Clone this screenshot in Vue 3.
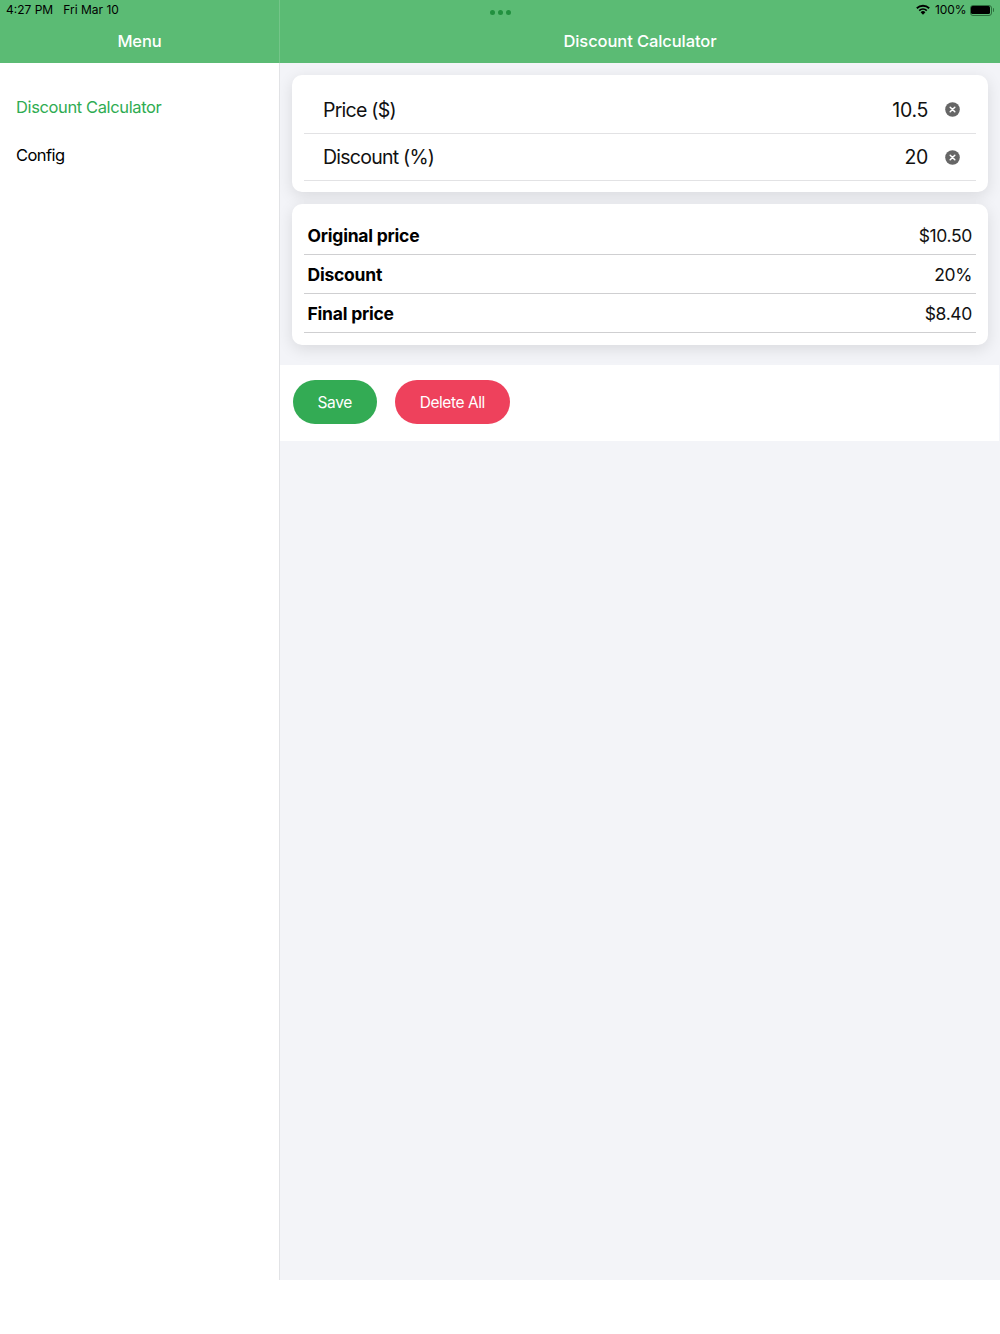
<script setup>
const inputs = [
  { label: 'Price ($)', value: '10.5' },
  { label: 'Discount (%)', value: '20' }
]
const results = [
  { label: 'Original price', value: '$10.50' },
  { label: 'Discount', value: '20%' },
  { label: 'Final price', value: '$8.40' }
]
</script>

<template>
  <div class="screen">
    <div class="status">
      <div class="status-left"><span>4:27 PM</span><span>Fri Mar 10</span></div>
      <div class="dots"><i></i><i></i><i></i></div>
      <div class="status-right">
        <svg class="wifi" width="14" height="11" viewBox="0 0 14 11">
          <path d="M7 10.8 4.6 8.2a3.4 3.4 0 0 1 4.8 0Z" fill="#000" />
          <path d="M3.8 7.3a4.7 4.7 0 0 1 6.4 0l1.2-1.4a6.5 6.5 0 0 0-8.8 0Z" fill="#000" />
          <path d="M1.4 5a8 8 0 0 1 11.2 0l1.2-1.4a9.8 9.8 0 0 0-13.6 0Z" fill="#000" />
        </svg>
        <span>100%</span>
        <div class="battery"><div class="battery-fill"></div></div>
        <div class="battery-cap"></div>
      </div>
    </div>
    <div class="split">
      <aside class="side">
        <header class="bar side-bar">Menu</header>
        <nav class="nav">
          <div class="nav-item active">Discount Calculator</div>
          <div class="nav-item">Config</div>
        </nav>
      </aside>
      <main class="main">
        <header class="bar">Discount Calculator</header>
        <section class="card inputs">
          <div v-for="f in inputs" :key="f.label" class="input-row">
            <span class="input-label">{{ f.label }}</span>
            <span class="input-value">{{ f.value }}</span>
            <svg class="clear" width="15" height="15" viewBox="0 0 15 15">
              <circle cx="7.5" cy="7.5" r="7.3" fill="#666" />
              <path d="M5.2 5.2l4.6 4.6M9.8 5.2l-4.6 4.6" stroke="#fff" stroke-width="1.5" stroke-linecap="round" />
            </svg>
          </div>
        </section>
        <section class="card results">
          <div v-for="r in results" :key="r.label" class="result-row">
            <span class="result-label">{{ r.label }}</span>
            <span class="result-value">{{ r.value }}</span>
          </div>
        </section>
        <div class="actions">
          <button class="btn save">Save</button>
          <button class="btn del">Delete All</button>
        </div>
      </main>
    </div>
  </div>
</template>

<style scoped>
.screen {
  position: relative;
  width: 1000px;
  height: 1334px;
  background: #fff;
  font-family: Inter, "Liberation Sans", sans-serif;
  color: #000;
  overflow: hidden;
}
.status {
  position: absolute;
  top: 0;
  left: 0;
  right: 0;
  height: 20px;
  display: flex;
  justify-content: space-between;
  align-items: center;
  padding: 0 6px;
  font-size: 12px;
  line-height: 20px;
  box-sizing: border-box;
}
.status-left { display: flex; gap: 10px; }
.status-right { display: flex; align-items: center; }
.status-right span { margin-left: 5px; letter-spacing: -0.1px; }
.wifi { margin-top: -1px; }
.battery {
  width: 22px;
  height: 11px;
  margin-left: 3px;
  border: 1px solid #2c6e3d;
  border-radius: 3px;
  padding: 0.5px;
  box-sizing: border-box;
}
.battery-fill { width: 100%; height: 100%; background: #000; border-radius: 1.5px; }
.battery-cap { width: 1.5px; height: 4px; margin-left: 1px; background: #2c6e3d; border-radius: 0 1px 1px 0; }
.dots {
  position: absolute;
  left: 490px;
  top: 10px;
  display: flex;
  gap: 3px;
}
.dots i { width: 5px; height: 5px; border-radius: 50%; background: #22903f; }
.split { display: flex; height: 1280px; }
.side { width: 280px; border-right: 1px solid #e2e3e6; box-sizing: border-box; flex: none; }
.bar {
  height: 63px;
  background: #5bbb74;
  color: #fff;
  font-size: 16.5px;
  font-weight: 500;
  letter-spacing: -0.09px;
  text-align: center;
  padding-top: 31px;
  line-height: 21px;
  box-sizing: border-box;
}
.side-bar { border-right: 1px solid #74c589; margin-right: -1px; }
.nav { padding-top: 20px; }
.nav-item { height: 49px; line-height: 48px; padding-left: 16px; font-size: 16.5px; letter-spacing: -0.38px; }
.nav-item:last-child { line-height: 46px; letter-spacing: -0.55px; }
.active { color: #2fac52; }
.main { flex: 1; background: #f3f4f8; }
.card {
  margin: 12px 12px 0 12px;
  background: #fff;
  border-radius: 10px;
  box-shadow: 0 4px 16px rgba(0, 0, 0, 0.11);
  padding: 0 12px;
}
.inputs { height: 117px; }
.input-row {
  height: 47px;
  display: flex;
  align-items: center;
  border-bottom: 1px solid #e2e2e4;
  padding: 0 16px 0 19px;
  font-size: 19.5px;
  letter-spacing: -0.75px;
  color: #111;
  box-sizing: border-box;
}
.input-row:first-child { height: 59px; padding-top: 11px; }
.input-label { flex: 1; }
.input-value { letter-spacing: -0.3px; }
.clear { margin-left: 17px; }
.results { height: 141px; margin-top: 12px; padding-top: 12px; box-sizing: border-box; }
.result-row {
  height: 39px;
  display: flex;
  justify-content: space-between;
  align-items: center;
  border-bottom: 1px solid #cfcfd1;
  padding: 0 4px 0 3.5px;
  font-size: 17.5px;
  letter-spacing: -0.22px;
  box-sizing: border-box;
}
.result-label { font-weight: 700; }
.result-value { color: #111; letter-spacing: -0.35px; }
.actions {
  margin-top: 20px;
  margin-right: 1px;
  height: 76px;
  background: #fff;
  display: flex;
  align-items: center;
  gap: 17.5px;
  padding: 0 12.5px 2px;
  box-sizing: border-box;
}
.btn {
  height: 44px;
  border: 0;
  border-radius: 22px;
  color: #fff;
  font-family: inherit;
  font-size: 15.5px;
  letter-spacing: -0.3px;
  padding: 0;
}
.save { width: 84.5px; background: #33ab54; }
.del { width: 115.5px; background: #ee415c; letter-spacing: -0.45px; }
</style>

<style>
html, body { margin: 0; background: #fff; }
</style>
